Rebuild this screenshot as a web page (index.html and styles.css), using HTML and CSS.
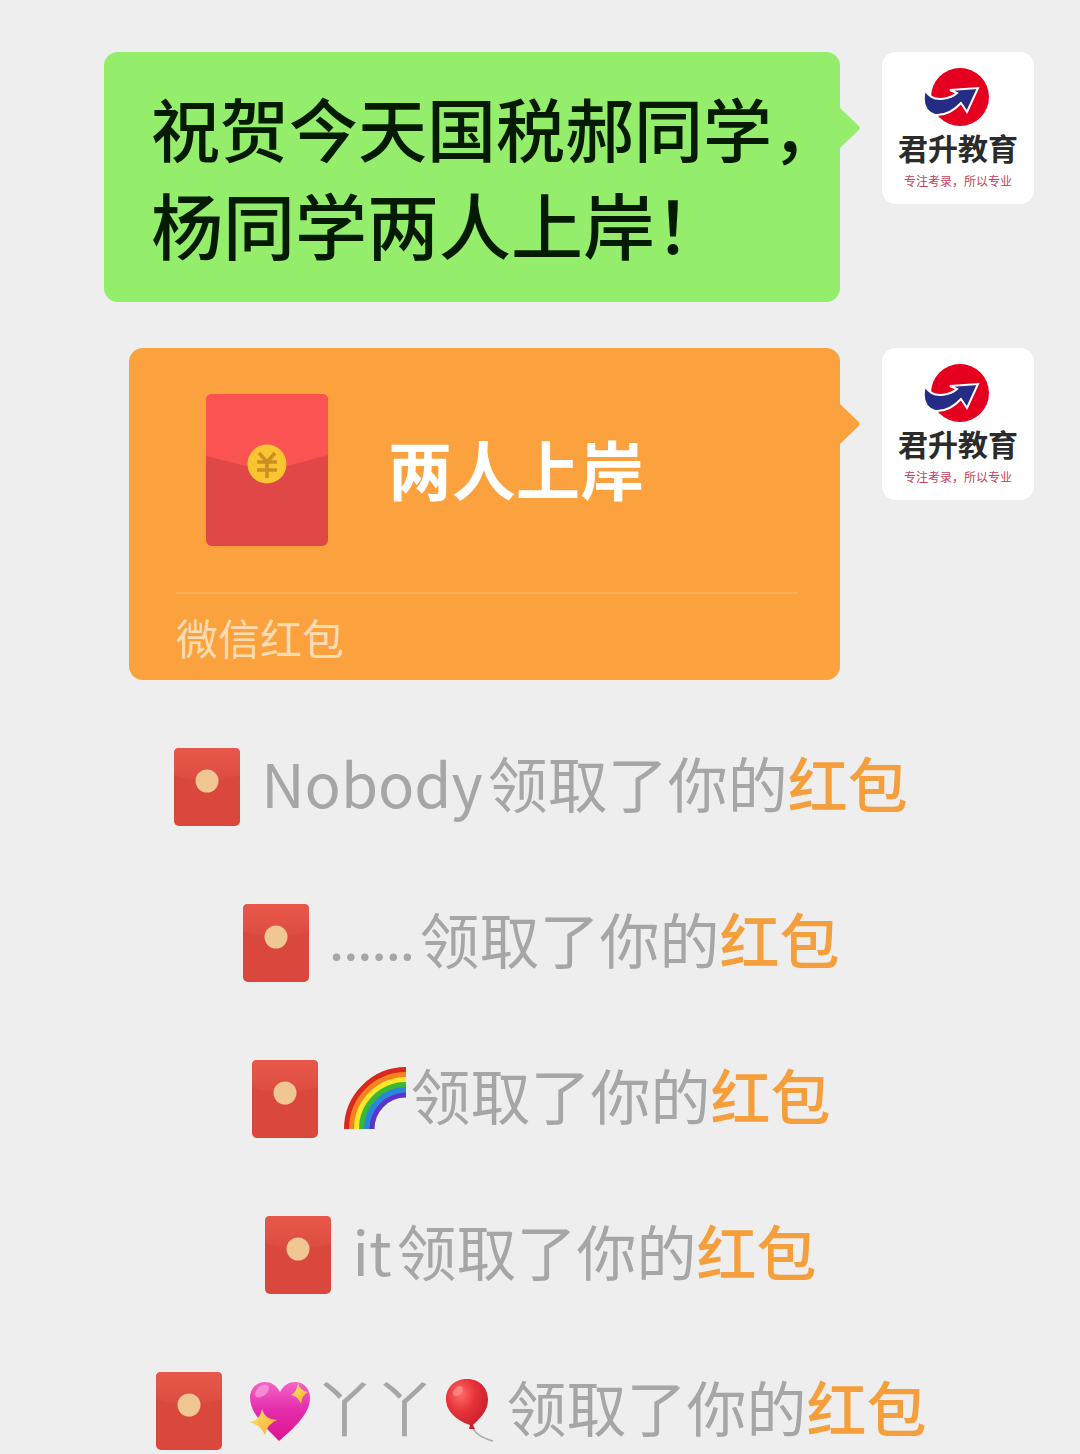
FILE: index.html
```html
<!DOCTYPE html>
<html lang="zh-CN">
<head>
    <meta charset="UTF-8">
    <meta name="viewport" content="width=device-width, initial-scale=1.0">
    <title>微信红包</title>
    <link rel="stylesheet" href="styles.css">
</head>
<body>
    <!-- Shared icons -->
    <svg class="sprite" aria-hidden="true">
        <defs>
            <linearGradient id="packet-fill" x1="0" y1="0" x2="0" y2="1">
                <stop offset="0" stop-color="#e7584a"/>
                <stop offset="1" stop-color="#dd4c41"/>
            </linearGradient>
            <radialGradient id="balloon-fill" cx="0.35" cy="0.3" r="0.7">
                <stop offset="0" stop-color="#ff6b68"/>
                <stop offset="0.5" stop-color="#e7333a"/>
                <stop offset="1" stop-color="#c9202d"/>
            </radialGradient>
            <linearGradient id="heart-fill" x1="0" y1="0" x2="0" y2="1">
                <stop offset="0" stop-color="#f564c6"/>
                <stop offset="0.45" stop-color="#e52eae"/>
                <stop offset="1" stop-color="#dc128c"/>
            </linearGradient>
            <linearGradient id="star-fill" x1="0" y1="0" x2="1" y2="1">
                <stop offset="0" stop-color="#ffe875"/>
                <stop offset="1" stop-color="#f7a928"/>
            </linearGradient>
        </defs>
        <symbol id="small-packet" viewBox="0 0 66 78">
            <rect width="66" height="78" rx="5" fill="#d9473d"/>
            <path d="M5 0H61Q66 0 66 5V27Q33 38 0 27V5Q0 0 5 0Z" fill="url(#packet-fill)"/>
            <circle cx="33" cy="33" r="11.5" fill="#f0c793"/>
        </symbol>
        <symbol id="logo" viewBox="0 0 68 60">
            <circle cx="36" cy="30" r="29" fill="#e60020"/>
            <path d="M1 23Q8 35 23 31Q30 29 33 26L26 23L54 21L43 45L37 36Q25 49 11 48Q-4 43 1 23Z" fill="#252c86" stroke="#fff" stroke-width="2" stroke-linejoin="miter"/>
        </symbol>
    </svg>

    <main class="chat">
        <div class="message">
            <div class="bubble">
                <p>祝贺今天国税郝同学，</p>
                <p class="second">杨同学两人上岸！</p>
            </div>
            <div class="avatar">
                <svg class="logo" aria-hidden="true"><use href="#logo"/></svg>
                <span class="brand">君升教育</span>
                <span class="slogan">专注考录，所以专业</span>
            </div>
        </div>

        <div class="message packet-message">
            <div class="bubble packet">
                <div class="packet-main">
                    <svg class="big-packet" viewBox="0 0 122 152" aria-hidden="true">
                        <rect width="122" height="152" rx="6" fill="#e04747"/>
                        <path d="M6 0H116Q122 0 122 6V61L82 72Q61 78 40 72L0 62V6Q0 0 6 0Z" fill="#fb5252"/>
                        <circle cx="61" cy="70" r="19.5" fill="#f9c632"/>
                        <path d="M53 59L61 68L69 59M61 68V84M51 68H71M51 76H71" fill="none" stroke="#c8901f" stroke-width="3.500"/>
                    </svg>
                    <span class="packet-title">两人上岸</span>
                </div>
                <div class="packet-footer">微信红包</div>
            </div>
            <div class="avatar">
                <svg class="logo" aria-hidden="true"><use href="#logo"/></svg>
                <span class="brand">君升教育</span>
                <span class="slogan">专注考录，所以专业</span>
            </div>
        </div>

        <div class="notices">
            <div class="notice">
                <svg class="small-packet" aria-hidden="true"><use href="#small-packet"/></svg>
                <span class="name">Nobody</span>
                <span>领取了你的<a href="#">红包</a></span>
            </div>
            <div class="notice">
                <svg class="small-packet" aria-hidden="true"><use href="#small-packet"/></svg>
                <span class="name dots">......</span>
                <span>领取了你的<a href="#">红包</a></span>
            </div>
            <div class="notice">
                <svg class="small-packet" aria-hidden="true"><use href="#small-packet"/></svg>
                <svg class="emoji" viewBox="0 0 64 64" role="img" aria-label="彩虹">
                    <g fill="none" stroke-width="6">
                        <path d="M4 63A59 59 0 0 1 63 4" stroke="#d9291c"/>
                        <path d="M9 63A54 54 0 0 1 63 9" stroke="#f58220"/>
                        <path d="M14 63A49 49 0 0 1 63 14" stroke="#fbe629"/>
                        <path d="M19 63A44 44 0 0 1 63 19" stroke="#37b934"/>
                        <path d="M24 63A39 39 0 0 1 63 24" stroke="#2a86dc"/>
                        <path d="M29 63A34 34 0 0 1 63 29" stroke="#5b35c9" stroke-width="5"/>
                    </g>
                </svg>
                <span>领取了你的<a href="#">红包</a></span>
            </div>
            <div class="notice">
                <svg class="small-packet" aria-hidden="true"><use href="#small-packet"/></svg>
                <span class="name">it</span>
                <span>领取了你的<a href="#">红包</a></span>
            </div>
            <div class="notice">
                <svg class="small-packet" aria-hidden="true"><use href="#small-packet"/></svg>
                <svg class="emoji" viewBox="0 0 64 64" role="img" aria-label="闪亮的心">
                    <path d="M32 63C19 50 3 35 3 20C3 2 25-2 33 14C41-2 63 2 63 20C63 36 46 51 32 63Z" fill="url(#heart-fill)"/>
                    <ellipse cx="15" cy="13" rx="8" ry="5" transform="rotate(-40 15 13)" fill="#fba3df" opacity="0.7"/>
                    <path d="M15 31Q18 42 30 42Q20 46 18 57Q14 47 2 44Q13 43 15 31Z" fill="url(#star-fill)"/>
                    <path d="M51 5Q53 13 61 14Q55 17 54 26Q51 18 44 17Q50 14 51 5Z" fill="url(#star-fill)"/>
                </svg>
                <span>丫丫</span>
                <svg class="emoji" viewBox="0 0 64 64" role="img" aria-label="气球">
                    <path d="M33 48Q36 58 54 63" fill="none" stroke="#aaa" stroke-width="1.500"/>
                    <path d="M28 1C42 1 49 11 49 22C49 34 39 42 34 47L36 51L30 51L31 47C19 43 7 34 7 21C7 9 16 1 28 1Z" fill="url(#balloon-fill)"/>
                    <ellipse cx="19" cy="13" rx="6" ry="4" transform="rotate(-45 19 13)" fill="#ff9c97" opacity="0.6"/>
                </svg>
                <span>领取了你的<a href="#">红包</a></span>
            </div>
        </div>
    </main>
</body>
</html>
```

FILE: styles.css
```css
* {
    box-sizing: border-box;
}
body {
    margin: 0;
    background-color: #eeeeee;
    font-family: "Noto Sans CJK SC", sans-serif;
}
p {
    margin: 0;
}
.sprite {
    position: absolute;
    width: 0;
    height: 0;
}
.chat {
    padding-top: 52px;
}
.message {
    display: flex;
    align-items: flex-start;
    gap: 42px;
    padding: 0 46px 0 104px;
    margin-bottom: 46px;
}
.packet-message {
    padding-left: 129px;
    margin-bottom: 68px;
}
.bubble {
    position: relative;
    flex: 1;
    min-width: 0;
    padding: 28px 0 32px 47px;
    border-radius: 14px;
    background-color: #95ed6c;
    color: #041b02;
    font-size: 69px;
    font-weight: 500;
    line-height: 95px;
    white-space: nowrap;
}
.bubble .second {
    font-size: 72px;
}
/* pointer towards the avatar */
.bubble::after {
    content: "";
    position: absolute;
    top: 56px;
    left: 100%;
    width: 20px;
    height: 40px;
    background-color: inherit;
    clip-path: polygon(0 0, 90% 43%, 100% 50%, 90% 57%, 0 100%);
}
.avatar {
    flex: none;
    display: flex;
    flex-direction: column;
    align-items: center;
    width: 152px;
    height: 152px;
    padding-top: 15px;
    border-radius: 14px;
    background-color: #ffffff;
    white-space: nowrap;
}
.logo {
    width: 68px;
    height: 60px;
}
.brand {
    color: #2b2b2b;
    font-size: 30px;
    font-weight: 700;
    line-height: 40px;
}
.slogan {
    color: #c2405c;
    font-size: 12px;
    line-height: 28px;
}
.packet {
    padding: 46px 42px 0 47px;
    background-color: #fba13d;
}
.packet-main {
    display: flex;
    align-items: flex-start;
    gap: 60px;
    padding: 0 0 46px 30px;
    border-bottom: 2px solid #fbad58;
}
.big-packet {
    width: 122px;
    height: 152px;
}
.packet-title {
    color: #ffffff;
    font-size: 64px;
    font-weight: 700;
    line-height: 146px;
}
.packet-footer {
    color: #fddcb4;
    font-size: 42px;
    font-weight: 400;
    line-height: 86px;
}
.notices {
    display: flex;
    flex-direction: column;
    gap: 78px;
    padding-left: 2px;
}
.notice {
    display: flex;
    justify-content: center;
    align-items: flex-start;
    height: 78px;
    color: #a6a6a6;
    font-size: 60px;
    line-height: 68px;
    white-space: nowrap;
}
.notice a {
    color: #f49f3c;
    font-weight: 500;
    text-decoration: none;
}
.small-packet {
    width: 66px;
    height: 78px;
    margin-right: 21px;
}
.emoji {
    width: 64px;
    height: 64px;
    margin: 6px 4px 0;
}
.name {
    margin-right: 5px;
}
.dots {
    font-family: Lato, sans-serif;
}
```
